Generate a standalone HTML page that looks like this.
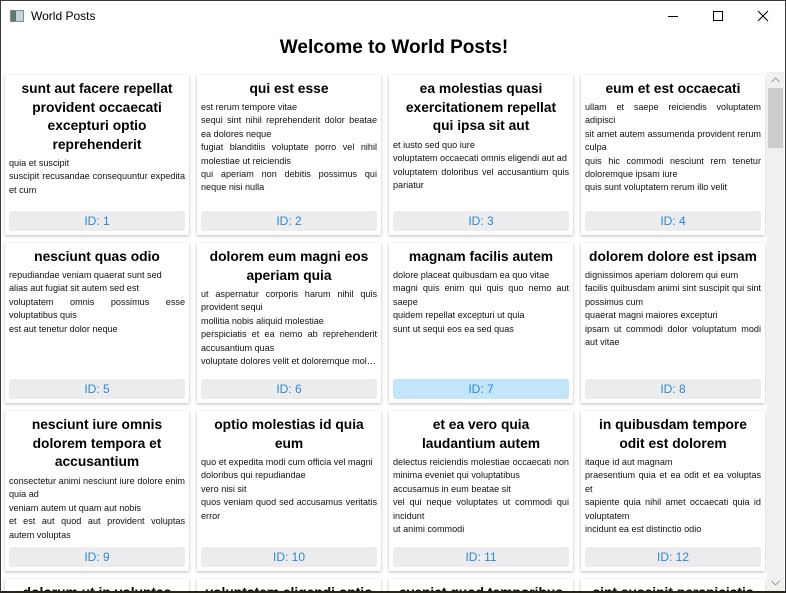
<!DOCTYPE html>
<html><head><meta charset="utf-8"><style>
*{margin:0;padding:0;box-sizing:border-box}
html,body{width:786px;height:593px;overflow:hidden}
body{background:#fff;font-family:"Liberation Sans",sans-serif;position:relative}
.win{position:absolute;left:0;top:0;width:786px;height:593px;border:1px solid #3a3a3a;border-bottom:2px solid #2a2418;background:#fff;overflow:hidden}
.tb{position:absolute;left:0;top:0;width:784px;height:30px}
.tb .t{position:absolute;left:30px;top:8px;font-size:12px;color:#000}
.ico{position:absolute;left:9px;top:9px;width:14px;height:12px;border:1px solid #7a8a9a;background:linear-gradient(90deg,#5a7a6a 0 40%,#c8d4dc 40%)}
h1{position:absolute;left:0;width:786px;top:36px;text-align:center;font-size:19px;font-weight:bold;color:#000}
.card{position:absolute;width:184px;height:160px;background:#fff;box-shadow:0 1px 3px rgba(0,0,0,.28)}
.card.l{height:14px}
.card .h{position:absolute;left:8px;right:8px;top:5px;text-align:center;font-weight:bold;font-size:13.8px;line-height:18.7px;color:#000}
.card.l .h,.nw{white-space:nowrap;left:0!important;right:0!important}
.card .b{position:absolute;left:4px;right:4px;font-size:9.1px;line-height:13.4px;color:#111;text-align:justify}
.card .b p{margin:0}
.card .btn{position:absolute;left:4px;right:4px;top:136px;height:20px;border-radius:3px;background:#ececee;color:#2b88d8;font-size:12px;text-align:center;line-height:20px}
.card .btn.a{background:#c2e5fb}
.sb{position:absolute;left:766px;top:71px;width:17px;height:519px;background:#f0f0f0}
.sb .th{position:absolute;left:1px;top:16px;width:15px;height:60px;background:#cdcdcd}
</style></head><body>
<div class="win">
<div class="tb"><div class="ico"></div><div class="t">World Posts</div>
<svg style="position:absolute;left:660px;top:8px" width="120" height="14"><line x1="7" y1="7.5" x2="17" y2="7.5" stroke="#000"/><rect x="52.5" y="2.5" width="9" height="9" fill="none" stroke="#000"/><path d="M97 2L107 12M107 2L97 12" stroke="#000"/></svg></div>
<h1>Welcome to World Posts!</h1>

<div class="card" style="left:4px;top:74px"><div class="h">sunt aut facere repellat provident occaecati excepturi optio reprehenderit</div><div class="b" style="top:82px"><p>quia et suscipit</p><p>suscipit recusandae consequuntur expedita et cum</p></div><div class="btn">ID: 1</div></div>
<div class="card" style="left:196px;top:74px"><div class="h">qui est esse</div><div class="b" style="top:26px"><p>est rerum tempore vitae</p><p>sequi sint nihil reprehenderit dolor beatae ea dolores neque</p><p>fugiat blanditiis voluptate porro vel nihil molestiae ut reiciendis</p><p>qui aperiam non debitis possimus qui neque nisi nulla</p></div><div class="btn">ID: 2</div></div>
<div class="card" style="left:388px;top:74px"><div class="h">ea molestias quasi exercitationem repellat qui ipsa sit aut</div><div class="b" style="top:64px"><p>et iusto sed quo iure</p><p>voluptatem occaecati omnis eligendi aut ad</p><p>voluptatem doloribus vel accusantium quis pariatur</p></div><div class="btn">ID: 3</div></div>
<div class="card" style="left:580px;top:74px"><div class="h">eum et est occaecati</div><div class="b" style="top:26px"><p>ullam et saepe reiciendis voluptatem adipisci</p><p>sit amet autem assumenda provident rerum culpa</p><p>quis hic commodi nesciunt rem tenetur doloremque ipsam iure</p><p>quis sunt voluptatem rerum illo velit</p></div><div class="btn">ID: 4</div></div>

<div class="card" style="left:4px;top:242px"><div class="h">nesciunt quas odio</div><div class="b" style="top:26px"><p>repudiandae veniam quaerat sunt sed</p><p>alias aut fugiat sit autem sed est</p><p>voluptatem omnis possimus esse voluptatibus quis</p><p>est aut tenetur dolor neque</p></div><div class="btn">ID: 5</div></div>
<div class="card" style="left:196px;top:242px"><div class="h">dolorem eum magni eos aperiam quia</div><div class="b" style="top:45px"><p>ut aspernatur corporis harum nihil quis provident sequi</p><p>mollitia nobis aliquid molestiae</p><p>perspiciatis et ea nemo ab reprehenderit accusantium quas</p><p style="white-space:nowrap;overflow:hidden;text-overflow:ellipsis">voluptate dolores velit et doloremque molestiae</p></div><div class="btn">ID: 6</div></div>
<div class="card" style="left:388px;top:242px"><div class="h">magnam facilis autem</div><div class="b" style="top:26px"><p>dolore placeat quibusdam ea quo vitae</p><p>magni quis enim qui quis quo nemo aut saepe</p><p>quidem repellat excepturi ut quia</p><p>sunt ut sequi eos ea sed quas</p></div><div class="btn a">ID: 7</div></div>
<div class="card" style="left:580px;top:242px"><div class="h nw">dolorem dolore est ipsam</div><div class="b" style="top:26px"><p>dignissimos aperiam dolorem qui eum</p><p>facilis quibusdam animi sint suscipit qui sint possimus cum</p><p>quaerat magni maiores excepturi</p><p>ipsam ut commodi dolor voluptatum modi aut vitae</p></div><div class="btn">ID: 8</div></div>

<div class="card" style="left:4px;top:410px"><div class="h">nesciunt iure omnis dolorem tempora et accusantium</div><div class="b" style="top:64px"><p>consectetur animi nesciunt iure dolore enim quia ad</p><p>veniam autem ut quam aut nobis</p><p>et est aut quod aut provident voluptas autem voluptas</p></div><div class="btn">ID: 9</div></div>
<div class="card" style="left:196px;top:410px"><div class="h">optio molestias id quia eum</div><div class="b" style="top:45px"><p>quo et expedita modi cum officia vel magni</p><p>doloribus qui repudiandae</p><p>vero nisi sit</p><p>quos veniam quod sed accusamus veritatis error</p></div><div class="btn">ID: 10</div></div>
<div class="card" style="left:388px;top:410px"><div class="h">et ea vero quia laudantium autem</div><div class="b" style="top:45px"><p>delectus reiciendis molestiae occaecati non minima eveniet qui voluptatibus</p><p>accusamus in eum beatae sit</p><p>vel qui neque voluptates ut commodi qui incidunt</p><p>ut animi commodi</p></div><div class="btn">ID: 11</div></div>
<div class="card" style="left:580px;top:410px"><div class="h">in quibusdam tempore odit est dolorem</div><div class="b" style="top:45px"><p>itaque id aut magnam</p><p>praesentium quia et ea odit et ea voluptas et</p><p>sapiente quia nihil amet occaecati quia id voluptatem</p><p>incidunt ea est distinctio odio</p></div><div class="btn">ID: 12</div></div>

<div class="card l" style="left:4px;top:578px"><div class="h">dolorum ut in voluptas</div></div>
<div class="card l" style="left:196px;top:578px"><div class="h">voluptatem eligendi optio</div></div>
<div class="card l" style="left:388px;top:578px"><div class="h">eveniet quod temporibus</div></div>
<div class="card l" style="left:580px;top:578px"><div class="h">sint suscipit perspiciatis</div></div>

<div class="sb"><div class="th"></div>
<svg style="position:absolute;left:4px;top:5px" width="9" height="6"><path d="M0.5 5L4.5 1L8.5 5" fill="none" stroke="#a0a0a0"/></svg>
<svg style="position:absolute;left:4px;bottom:5px" width="9" height="6"><path d="M0.5 1L4.5 5L8.5 1" fill="none" stroke="#a0a0a0"/></svg></div>
</div>
</body></html>
